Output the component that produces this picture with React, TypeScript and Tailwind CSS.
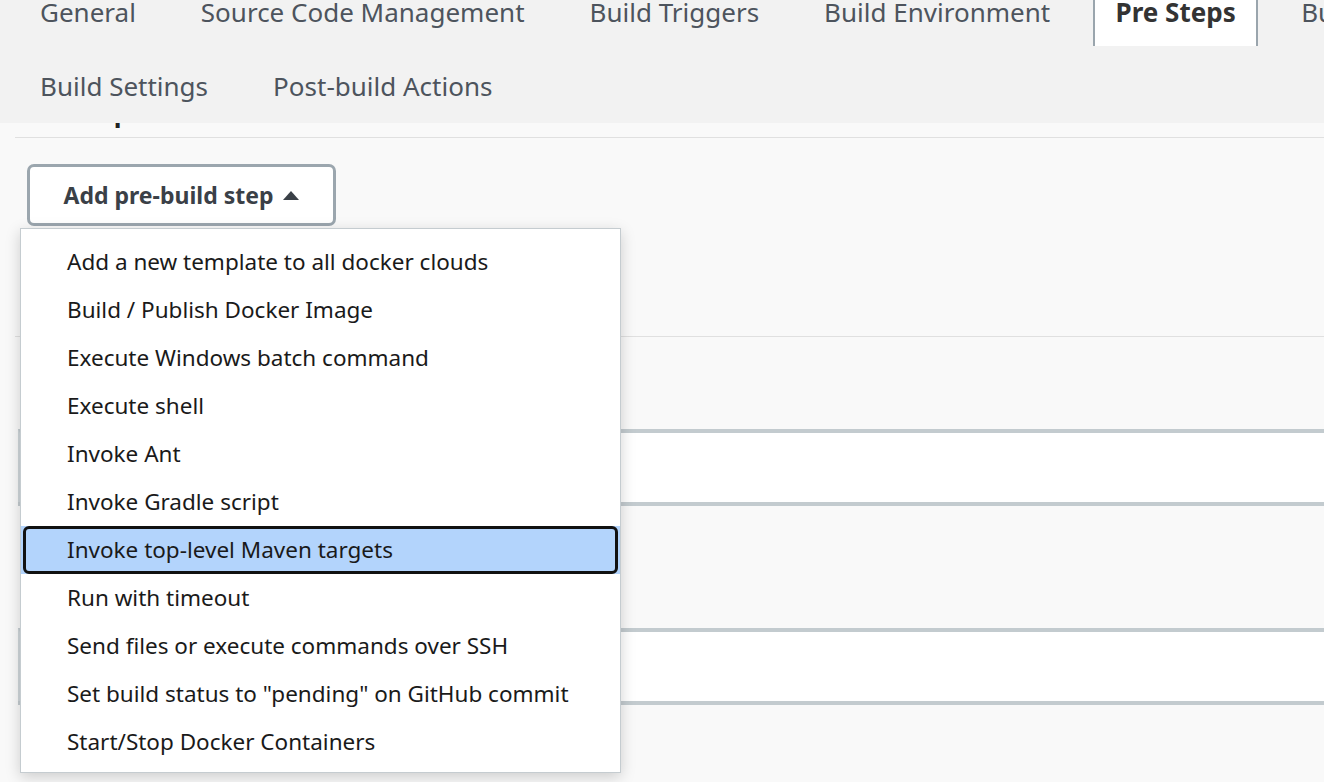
import React from "react";

const rowOne = ["General", "Source Code Management", "Build Triggers", "Build Environment"];
const rowTwo = ["Build Settings", "Post-build Actions"];

const steps = [
  "Add a new template to all docker clouds",
  "Build / Publish Docker Image",
  "Execute Windows batch command",
  "Execute shell",
  "Invoke Ant",
  "Invoke Gradle script",
  "Invoke top-level Maven targets",
  "Run with timeout",
  "Send files or execute commands over SSH",
  'Set build status to "pending" on GitHub commit',
  "Start/Stop Docker Containers",
];

function Tab({ label }: { label: string }) {
  return (
    <div className="h-[68px] px-[22px] flex items-center whitespace-nowrap text-[#4d545d]">
      {label}
    </div>
  );
}

export default function App() {
  return (
    <main
      className="relative h-[782px] w-[1324px] overflow-hidden bg-[#f9f9f9]"
      style={{ fontFamily: '"Noto Sans", "Open Sans", sans-serif' }}
    >
      {/* tab bar */}
      <div className="-mt-[22px] bg-[#f2f2f2] pl-[18px] pb-[3px] flex flex-col gap-[6px] text-[26px] overflow-hidden">
        <div className="flex gap-[21px]">
          {rowOne.map((t) => (
            <Tab key={t} label={t} />
          ))}
          <div className="h-[68px] w-[165px] shrink-0 flex items-center justify-center bg-white border-x-2 border-[#9aa5ad] font-bold text-[#333]">
            Pre Steps
          </div>
          <Tab label="Build" />
        </div>
        <div className="flex gap-[21px]">
          {rowTwo.map((t) => (
            <Tab key={t} label={t} />
          ))}
        </div>
      </div>

      <div className="pl-[15px]">
        {/* section heading, mostly hidden under the tab bar */}
        <div className="h-[15px] overflow-hidden border-b border-[#e0e0e0]">
          <div className="-mt-[27px] pl-[8px] text-[26px] leading-[32px] font-bold text-[#222]">Pre Steps</div>
        </div>

        <div className="relative ml-[12px] mt-[26px]">
          <button className="h-[62px] w-[309px] flex items-center justify-center gap-[10px] rounded-[7px] border-[3px] border-[#9ba6ae] bg-white text-[23px] font-bold text-[#3a4047]">
            Add pre-build step
            <svg width="16" height="9" viewBox="0 0 16 9">
              <polygon points="8,0 16,9 0,9" fill="#3a4047" />
            </svg>
          </button>
        </div>

        <div className="mt-[110px] border-t border-[#e0e0e0]" />

        <div className="mt-[92px] ml-[3px]">
          <div className="h-[73px] border-t-4 border-[#c3cbcf] bg-white border-l-2 border-l-[#cfd6da]" />
          <div className="h-[126px] border-t-4 border-[#c3cbcf]" />
          <div className="h-[73px] border-t-4 border-[#c3cbcf] bg-white border-l-2 border-l-[#cfd6da]" />
          <div className="border-t-4 border-[#c3cbcf]" />
        </div>
      </div>

      {/* dropdown menu */}
      <div className="absolute left-[20px] top-[228px] w-[601px] border border-[#c5ccd0] bg-white pt-[9px] pb-[6px] shadow-[0_4px_14px_rgba(0,0,0,0.18)]">
        {steps.map((s) =>
          s === "Invoke top-level Maven targets" ? (
            <div key={s} className="h-[48px] bg-[#b3d4fc]">
              <div className="h-full mx-[2px] rounded-[6px] border-[3px] border-[#111] pl-[41px] flex items-center text-[22.5px] text-[#1a1a1a]">
                {s}
              </div>
            </div>
          ) : (
            <div key={s} className="h-[48px] pl-[46px] flex items-center whitespace-nowrap text-[22.5px] text-[#1a1a1a]">
              {s}
            </div>
          )
        )}
      </div>
    </main>
  );
}
